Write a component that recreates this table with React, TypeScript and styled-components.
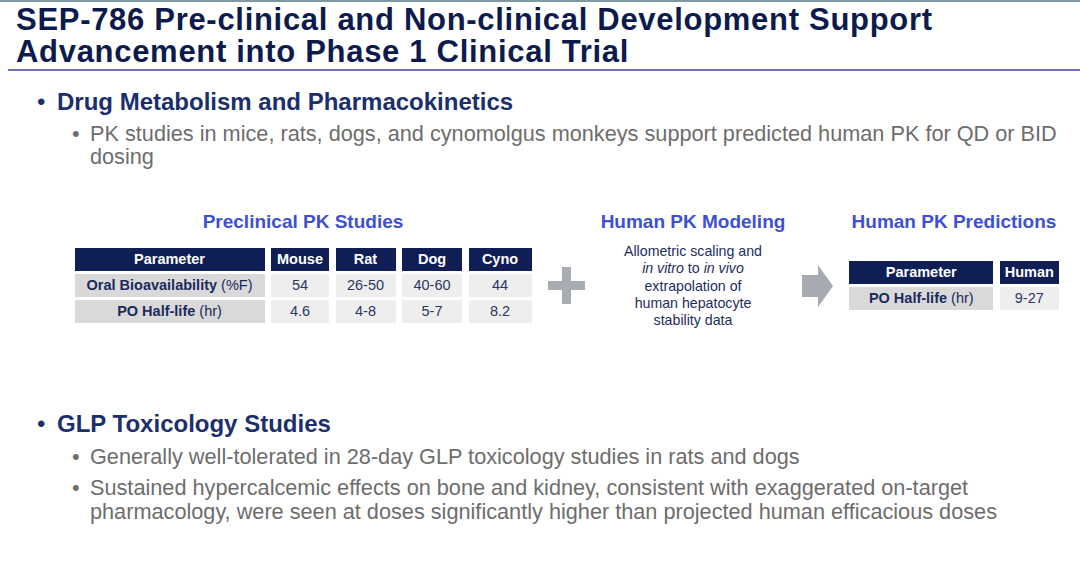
import React from "react";
import styled, { createGlobalStyle } from "styled-components";

const GlobalStyle = createGlobalStyle`
  html, body { margin: 0; padding: 0; background: #ffffff; }
  body { font-family: "Liberation Sans", Arial, sans-serif; width: 1080px; height: 561px; overflow: hidden; }
`;

const Slide = styled.div`
  width: 1080px;
  height: 561px;
  box-sizing: border-box;
  border-top: 2px solid #7f98a2;
  display: flex;
  flex-direction: column;
`;

const Title = styled.h1`
  margin: 0;
  padding: 1.8px 0 0 16px;
  font-size: 31px;
  line-height: 32px;
  letter-spacing: 0.7px;
  font-weight: 700;
  color: #0c1b4c;
  white-space: nowrap;
`;

const Divider = styled.div`
  margin: 1.2px 0 0 8px;
  height: 2px;
  background: #6a70c6;
`;

const Section = styled.section<{ $top: number }>`
  margin-top: ${(p) => p.$top}px;
  display: flex;
  flex-direction: column;
`;

const MainBullet = styled.div`
  display: grid;
  grid-template-columns: 20px 1fr;
  padding-left: 37px;
  font-size: 24px;
  line-height: 28px;
  font-weight: 700;
  color: #1b2f6c;
`;

const SubList = styled.ul<{ $gap: number; $top: number }>`
  list-style: none;
  margin: ${(p) => p.$top}px 0 0;
  padding: 0 6px 0 72px;
  display: flex;
  flex-direction: column;
  gap: ${(p) => p.$gap}px;
`;

const SubItem = styled.li`
  display: grid;
  grid-template-columns: 18px 1fr;
  font-size: 21.7px;
  line-height: 23.5px;
  color: #6d6d6d;
`;

const Dot = styled.span`
  font-weight: 400;
`;

const Figure = styled.div`
  margin-top: 42px;
  display: flex;
  align-items: flex-start;
  padding-left: 73px;
`;

const Panel = styled.div<{ $width: number; $left?: number }>`
  width: ${(p) => p.$width}px;
  margin-left: ${(p) => p.$left ?? 0}px;
  flex: none;
  display: flex;
  flex-direction: column;
  align-items: center;
`;

const PanelTitle = styled.div`
  font-size: 19px;
  line-height: 22px;
  font-weight: 700;
  color: #3e50d2;
  white-space: nowrap;
`;

const Grid = styled.div<{ $cols: string; $top: number }>`
  margin-top: ${(p) => p.$top}px;
  display: grid;
  grid-template-columns: ${(p) => p.$cols};
  grid-auto-rows: 23px;
  column-gap: 6.5px;
  row-gap: 3px;
  font-size: 14.5px;
`;

const Cell = styled.div<{ $kind: "head" | "label" | "value" }>`
  display: flex;
  align-items: center;
  justify-content: center;
  white-space: nowrap;
  background: ${(p) =>
    p.$kind === "head" ? "#0f1f56" : p.$kind === "label" ? "#d9d9d9" : "#eeeeee"};
  color: ${(p) => (p.$kind === "head" ? "#ffffff" : p.$kind === "label" ? "#1b2a5c" : "#2b3761")};
  font-weight: ${(p) => (p.$kind === "value" ? 400 : 700)};
`;

const Unit = styled.span`
  font-weight: 400;
  margin-left: 4px;
`;

const Symbol = styled.div<{ $left: number; $top: number; $w: number }>`
  margin-left: ${(p) => p.$left}px;
  margin-top: ${(p) => p.$top}px;
  width: ${(p) => p.$w}px;
  flex: none;
  display: flex;
`;

const ModelText = styled.p`
  margin: 10px 0 0;
  text-align: center;
  font-size: 14.2px;
  line-height: 17.3px;
  color: #1d2d5e;
`;

const Plus = () => (
  <svg width="37" height="37" viewBox="0 0 37 37">
    <rect x="14" y="0" width="9" height="37" fill="#a8adb3" />
    <rect x="0" y="14" width="37" height="9" fill="#a8adb3" />
  </svg>
);

const Arrow = () => (
  <svg width="31" height="42" viewBox="0 0 31 42">
    <polygon points="0,10 16,10 16,0 31,21 16,42 16,32 0,32" fill="#a6abb2" />
  </svg>
);

const speciesRows = [
  { label: "Oral Bioavailability", unit: "(%F)", values: ["54", "26-50", "40-60", "44"] },
  { label: "PO Half-life", unit: "(hr)", values: ["4.6", "4-8", "5-7", "8.2"] },
];

export default function App() {
  return (
    <>
      <GlobalStyle />
      <Slide>
        <Title>
          SEP-786 Pre-clinical and Non-clinical Development Support
          <br />
          Advancement into Phase 1 Clinical Trial
        </Title>
        <Divider />

        <Section $top={17}>
          <MainBullet>
            <Dot>•</Dot>
            <span>Drug Metabolism and Pharmacokinetics</span>
          </MainBullet>
          <SubList $gap={0} $top={6}>
            <SubItem>
              <Dot>•</Dot>
              <span>
                PK studies in mice, rats, dogs, and cynomolgus monkeys support predicted human PK for QD or BID
                dosing
              </span>
            </SubItem>
          </SubList>
        </Section>

        <Figure>
          <Panel $width={460}>
            <PanelTitle>Preclinical PK Studies</PanelTitle>
            <Grid $cols="190px 58px 60px 60px 63px" $top={15}>
              <Cell $kind="head">Parameter</Cell>
              <Cell $kind="head">Mouse</Cell>
              <Cell $kind="head">Rat</Cell>
              <Cell $kind="head">Dog</Cell>
              <Cell $kind="head">Cyno</Cell>
              {speciesRows.map((r) => (
                <React.Fragment key={r.label}>
                  <Cell $kind="label">
                    {r.label}
                    <Unit>{r.unit}</Unit>
                  </Cell>
                  {r.values.map((v, i) => (
                    <Cell $kind="value" key={i}>
                      {v}
                    </Cell>
                  ))}
                </React.Fragment>
              ))}
            </Grid>
          </Panel>

          <Symbol $left={15} $top={56} $w={37}>
            <Plus />
          </Symbol>

          <Panel $width={200} $left={8}>
            <PanelTitle>Human PK Modeling</PanelTitle>
            <ModelText>
              Allometric scaling and
              <br />
              <i>in vitro</i> to <i>in vivo</i>
              <br />
              extrapolation of
              <br />
              human hepatocyte
              <br />
              stability data
            </ModelText>
          </Panel>

          <Symbol $left={9} $top={54} $w={31}>
            <Arrow />
          </Symbol>

          <Panel $width={208} $left={17}>
            <PanelTitle>Human PK Predictions</PanelTitle>
            <Grid $cols="144px 59px" $top={28}>
              <Cell $kind="head">Parameter</Cell>
              <Cell $kind="head">Human</Cell>
              <Cell $kind="label">
                PO Half-life
                <Unit>(hr)</Unit>
              </Cell>
              <Cell $kind="value">9-27</Cell>
            </Grid>
          </Panel>
        </Figure>

        <Section $top={81}>
          <MainBullet>
            <Dot>•</Dot>
            <span>GLP Toxicology Studies</span>
          </MainBullet>
          <SubList $gap={7.5} $top={7}>
            <SubItem>
              <Dot>•</Dot>
              <span>Generally well-tolerated in 28-day GLP toxicology studies in rats and dogs</span>
            </SubItem>
            <SubItem>
              <Dot>•</Dot>
              <span>
                Sustained hypercalcemic effects on bone and kidney, consistent with exaggerated on-target
                pharmacology, were seen at doses significantly higher than projected human efficacious doses
              </span>
            </SubItem>
          </SubList>
        </Section>
      </Slide>
    </>
  );
}
